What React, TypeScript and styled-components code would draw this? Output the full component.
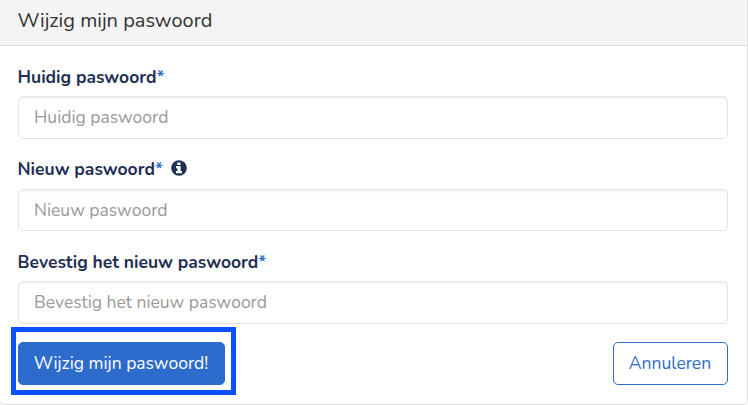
import React from "react";
import styled, { createGlobalStyle } from "styled-components";

const GlobalStyle = createGlobalStyle`
  *, *::before, *::after { box-sizing: border-box; }
  body {
    margin: 0;
    background: #fff;
    font-family: Nunito, Lato, "Noto Sans", sans-serif;
    font-size: 17.5px;
    color: #1f3054;
    overflow: hidden;
  }
`;

const Page = styled.main`
  height: 405px;
  overflow: hidden;
`;

const Card = styled.section`
  width: 749px;
  height: 405px;
  margin-left: -1px;
  display: flex;
  flex-direction: column;
  background: #fff;
  border: 1px solid #dcdcdc;
  border-top: 0;
  border-radius: 0 0 5px 5px;
`;

const CardHeader = styled.header`
  height: 46px;
  margin-right: 1px;
  padding: 6px 17.5px 0;
  background: #f4f4f4;
  border-bottom: 1px solid #d9d9db;
`;

const Title = styled.h1`
  margin: 0;
  font-size: 20px;
  font-weight: 400;
  line-height: 30px;
  color: #333;
  white-space: nowrap;
`;

const Form = styled.form`
  display: flex;
  flex-direction: column;
  padding: 17px 19px 0 18px;
`;

const Field = styled.div<{ $height: number; $gap: number }>`
  display: flex;
  flex-direction: column;
  justify-content: space-between;
  height: ${(p) => p.$height}px;
  margin-top: ${(p) => p.$gap}px;
`;

const Label = styled.label`
  display: flex;
  align-items: center;
  height: 27px;
  margin-left: -0.5px;
  font-size: 17.5px;
  font-weight: 700;
  white-space: nowrap;
`;

const Required = styled.span`
  color: #2d6bcd;
`;

const InfoIcon = styled.svg`
  width: 16px;
  height: 16px;
  margin: 0 0 1px 8.5px;
`;

const Input = styled.input<{ $height: number }>`
  width: 100%;
  height: ${(p) => p.$height}px;
  padding: 0 15px 1px;
  border: 1px solid #e3e3e6;
  border-radius: 5px;
  box-shadow: inset 0 2px 2px rgba(0, 0, 0, 0.05);
  background: #fff;
  font-family: inherit;
  font-size: 17.5px;
  color: #1f3054;
  outline: none;

  &::placeholder {
    color: #999;
    opacity: 1;
  }
`;

const Actions = styled.div`
  display: flex;
  justify-content: space-between;
  align-items: flex-start;
  margin: 3px 0 0 -7px;
`;

const Highlight = styled.div`
  width: 225px;
  height: 68px;
  padding: 10px 0 0 2px;
  border: 5px solid #0a52ff;
`;

const Button = styled.button<{ $primary?: boolean }>`
  width: ${(p) => (p.$primary ? 207 : 115)}px;
  height: 43px;
  margin-top: ${(p) => (p.$primary ? 0 : 15)}px;
  padding: 0 1px 1px 0;
  border: 1px solid #2d6bcd;
  border-radius: 5px;
  background: ${(p) => (p.$primary ? "#2d6bcd" : "#fff")};
  color: ${(p) => (p.$primary ? "#fff" : "#2d6bcd")};
  font-family: inherit;
  font-size: 17.5px;
  white-space: nowrap;
`;

const fields = [
  { id: "current", text: "Huidig paswoord", block: 76, input: 43, gap: 0, info: false },
  { id: "new", text: "Nieuw paswoord", block: 76, input: 42, gap: 16, info: true },
  { id: "confirm", text: "Bevestig het nieuw paswoord", block: 76, input: 43, gap: 17, info: false },
];

export default function App() {
  return (
    <Page>
      <GlobalStyle />
      <Card>
        <CardHeader>
          <Title>Wijzig mijn paswoord</Title>
        </CardHeader>
        <Form>
          {fields.map((f) => (
            <Field key={f.id} $height={f.block} $gap={f.gap}>
              <Label htmlFor={f.id}>
                {f.text}
                <Required>*</Required>
                {f.info && (
                  <InfoIcon viewBox="0 0 16 16" aria-hidden="true">
                    <circle cx="8" cy="8" r="7.8" fill="#1f3054" />
                    <path d="M6.3 2.4h3.2v2.5H6.3zM5 6.1h4.6v5H11v2.2H5v-2.2h1.4V8.3H5z" fill="#fff" />
                  </InfoIcon>
                )}
              </Label>
              <Input id={f.id} type="text" placeholder={f.text} $height={f.input} />
            </Field>
          ))}
          <Actions>
            <Highlight>
              <Button type="button" $primary>Wijzig mijn paswoord!</Button>
            </Highlight>
            <Button type="button">Annuleren</Button>
          </Actions>
        </Form>
      </Card>
    </Page>
  );
}
